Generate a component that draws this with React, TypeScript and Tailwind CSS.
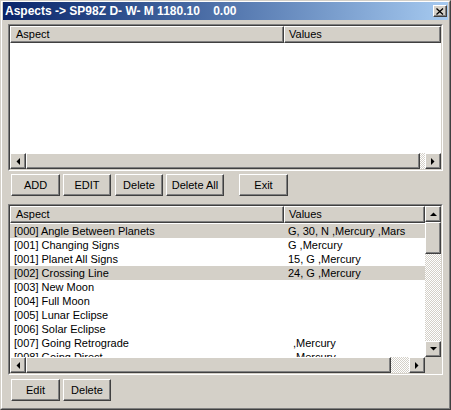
import type { ReactNode } from "react";

type Row = { aspect: string; values: string; hl?: boolean; indent?: boolean };

const ROWS: Row[] = [
  { aspect: "[000] Angle Between Planets", values: "G, 30, N ,Mercury ,Mars", hl: true },
  { aspect: "[001] Changing Signs", values: "G ,Mercury" },
  { aspect: "[001] Planet All Signs", values: "15, G ,Mercury" },
  { aspect: "[002] Crossing Line", values: "24, G ,Mercury", hl: true },
  { aspect: "[003] New Moon", values: "" },
  { aspect: "[004] Full Moon", values: "" },
  { aspect: "[005] Lunar Eclipse", values: "" },
  { aspect: "[006] Solar Eclipse", values: "" },
  { aspect: "[007] Going Retrograde", values: ",Mercury", indent: true },
  { aspect: "[008] Going Direct", values: ",Mercury", indent: true },
];

// raised 3d edge, classic windows look
const RAISED =
  "border border-t-white border-l-white border-r-[#404040] border-b-[#404040] shadow-[inset_-1px_-1px_0_#808080]";
const DITHER =
  "bg-[repeating-conic-gradient(#ffffff_0_25%,#d4d0c8_0_50%)] bg-[length:2px_2px]";

function Arrow({ dir }: { dir: "left" | "right" | "up" | "down" }) {
  const pts = {
    left: "4,0 4,7 0.5,3.5",
    right: "0,0 0,7 3.5,3.5",
    up: "0,4 7,4 3.5,0.5",
    down: "0,0 7,0 3.5,3.5",
  }[dir];
  const vert = dir === "up" || dir === "down";
  return (
    <svg width={vert ? 7 : 4} height={vert ? 4 : 7} viewBox={vert ? "0 0 7 4" : "0 0 4 7"}>
      <polygon points={pts} fill="#000" />
    </svg>
  );
}

function ScrollBtn({ dir }: { dir: "left" | "right" | "up" | "down" }) {
  return (
    <div className={`w-[16px] h-[16px] shrink-0 bg-[#d4d0c8] grid place-items-center ${RAISED}`}>
      <Arrow dir={dir} />
    </div>
  );
}

function Btn({ label, w, ml }: { label: string; w: string; ml: string }) {
  return (
    <button className={`h-[22px] ${w} ${ml} bg-[#d4d0c8] text-[11px] text-black grid place-items-center ${RAISED}`}>
      {label}
    </button>
  );
}

function Sunken({ className, children }: { className: string; children: ReactNode }) {
  return (
    <div className={`border border-t-[#808080] border-l-[#808080] border-r-white border-b-white ${className}`}>
      <div className="h-full border border-t-[#404040] border-l-[#404040] border-r-[#d4d0c8] border-b-[#d4d0c8] bg-white flex flex-col overflow-hidden">
        {children}
      </div>
    </div>
  );
}

function Header({ valuesW }: { valuesW: string }) {
  return (
    <div className="flex h-[17px] shrink-0 text-[11px] leading-[15px]">
      <div className={`w-[274px] bg-[#d4d0c8] pl-[5px] ${RAISED}`}>Aspect</div>
      <div className={`${valuesW} bg-[#d4d0c8] pl-[4px] ${RAISED}`}>Values</div>
    </div>
  );
}

export default function App() {
  return (
    <div className="w-[451px] h-[410px] bg-[#d4d0c8] font-['Liberation_Sans',Arial,sans-serif] text-black select-none">
      <div className="h-full border border-t-[#d4d0c8] border-l-[#d4d0c8] border-r-[#404040] border-b-[#404040]">
        <div className="h-full border border-t-white border-l-white border-r-[#808080] border-b-[#808080] flex flex-col">
          {/* title bar */}
          <div className="h-[18px] mx-[1px] flex items-center justify-between bg-linear-to-r from-[#0a246a] to-[#a6caf0]">
            <span className="pl-[2px] text-[12px] font-bold text-white whitespace-pre leading-none">
              {"Aspects -> SP98Z D- W- M 1180.10    0.00"}
            </span>
            <div className={`w-[14px] h-[12px] mr-[1px] bg-[#d4d0c8] grid place-items-center ${RAISED}`}>
              <svg width="8" height="7" viewBox="0 0 8 7">
                <path d="M0.5 0.5L7 6.5M7 0.5L0.5 6.5" stroke="#000" strokeWidth="1.3" />
              </svg>
            </div>
          </div>

          <div className="flex flex-col px-[6px]">
            {/* top list */}
            <Sunken className="mt-[4px] h-[147px]">
              <Header valuesW="flex-1" />
              <div className="flex-1" />
              <div className="flex h-[16px] shrink-0">
                <ScrollBtn dir="left" />
                <div className={`flex-1 bg-[#d4d0c8] ${RAISED}`} />
                <div className={`w-[5px] ${DITHER}`} />
                <ScrollBtn dir="right" />
              </div>
            </Sunken>

            {/* buttons */}
            <div className="flex mt-[3px]">
              <Btn label="ADD" w="w-[49px]" ml="ml-[3px]" />
              <Btn label="EDIT" w="w-[48px]" ml="ml-[3px]" />
              <Btn label="Delete" w="w-[48px]" ml="ml-[4px]" />
              <Btn label="Delete All" w="w-[58px]" ml="ml-[3px]" />
              <Btn label="Exit" w="w-[49px]" ml="ml-[15px]" />
            </div>

            {/* aspect list */}
            <Sunken className="mt-[8px] h-[171px]">
              <div className="flex flex-1 min-h-0">
                <div className="flex-1 flex flex-col min-w-0">
                  <Header valuesW="w-[141px]" />
                  <div className="flex-1 overflow-hidden pt-[1px]">
                    {ROWS.map((r) => (
                      <div
                        key={r.aspect}
                        className={`flex h-[14px] text-[11px] leading-[14px] whitespace-pre ${r.hl ? "bg-[#d4d0c8]" : ""}`}
                      >
                        <div className="w-[274px] pl-[4px]">{r.aspect}</div>
                        <div className={r.indent ? "pl-[9px]" : "pl-[4px]"}>{r.values}</div>
                      </div>
                    ))}
                  </div>
                </div>
                <div className="w-[16px] flex flex-col">
                  <ScrollBtn dir="up" />
                  <div className={`h-[32px] bg-[#d4d0c8] ${RAISED}`} />
                  <div className={`flex-1 ${DITHER}`} />
                  <ScrollBtn dir="down" />
                </div>
              </div>
              <div className="flex h-[16px] shrink-0">
                <ScrollBtn dir="left" />
                <div className={`w-[365px] bg-[#d4d0c8] ${RAISED}`} />
                <div className={`flex-1 ${DITHER}`} />
                <ScrollBtn dir="right" />
                <div className="w-[16px] bg-[#d4d0c8]" />
              </div>
            </Sunken>

            <div className="flex mt-[4px]">
              <Btn label="Edit" w="w-[49px]" ml="ml-[3px]" />
              <Btn label="Delete" w="w-[48px]" ml="ml-[3px]" />
            </div>
          </div>
        </div>
      </div>
    </div>
  );
}
